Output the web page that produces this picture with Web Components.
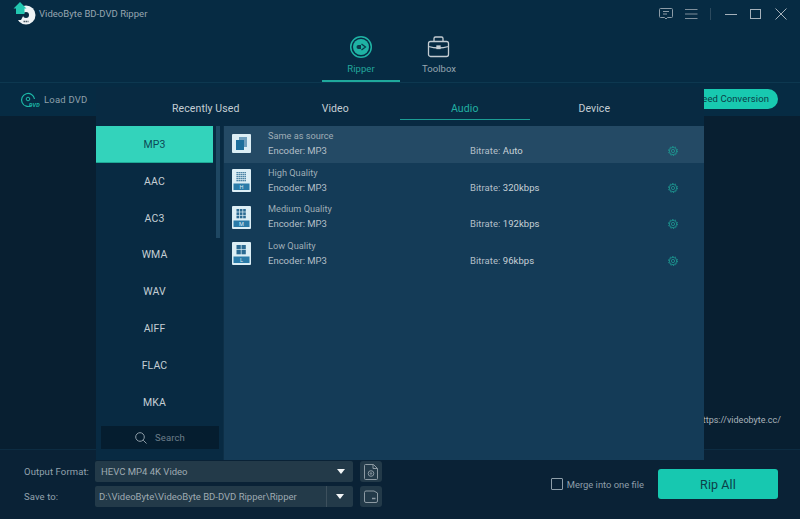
<!DOCTYPE html>
<html><head><meta charset="utf-8"><style>
html,body{margin:0;padding:0;width:800px;height:519px;overflow:hidden;background:#082032;font-family:Roboto,"Liberation Sans",sans-serif}
</style></head><body>
<vb-app></vb-app>
<template id="t-app"><style>
:host{display:flex;flex-direction:column;width:800px;height:519px;position:relative;overflow:hidden;background:#0a2236}
.mid{flex:1;min-height:0;display:flex;background:#081f31;justify-content:flex-end;align-items:flex-end}
.url{font-size:9px;color:#a9b4bc;padding:0 19px 24px 0}
</style>
<vb-header></vb-header><vb-loadbar></vb-loadbar>
<div class="mid"><div class="url">https://videobyte.cc/</div></div>
<vb-footer></vb-footer>
<vb-popup></vb-popup>
</template>

<template id="t-header"><style>
:host{display:block;height:83px;background:#062b43;box-sizing:border-box;position:relative;border-bottom:1px solid #0d3850}
.top{display:flex;align-items:center;height:27px;padding:0 13px}
.logo{width:26px;height:23px;display:block;align-self:flex-start;margin-top:2px}
.name{font-size:9.500px;letter-spacing:.03px;color:#97a6b1;flex:1}
.ctl{display:flex;align-items:center}
.ctl svg{display:block}
.nav{display:flex;justify-content:center;margin-top:8px}
.tab{width:78px;height:47px;box-sizing:border-box;display:flex;flex-direction:column;align-items:center;font-size:9.500px;color:#97a6b1;letter-spacing:.05px;border-bottom:2px solid transparent}
.tab svg{display:block;height:24px;width:24px;margin-bottom:4px}
.tab.on{color:#22a79b;border-bottom-color:#1fa99c}
</style>
<div class="top">
<svg class="logo" viewBox="13 2 26 23"><circle cx="26" cy="15" r="9.500" fill="#eef3f5"/><circle cx="26" cy="15" r="3" fill="#062b43"/><path d="M14 11h10v3.500l-3 5.500h-7z" fill="#062b43"/><path d="M20 2l6.500 6.500h-2v5.500h-8.500V8.500h-2.500z" fill="#22c7b1"/><path d="M23.500 21.500h5" stroke="#4a5a65" stroke-width="1.500" stroke-dasharray="1.500 .5"/></svg>
<span class="name">VideoByte BD-DVD Ripper</span>
<div class="ctl">
<svg width="16" height="14" viewBox="0 0 16 14" fill="none" stroke="#8d9ca7" style="margin-right:11px"><path d="M2.500 1.500h11a1 1 0 0 1 1 1v7a1 1 0 0 1-1 1H9.500l-1.500 1.500-1.500-1.500h-4a1 1 0 0 1-1-1v-7a1 1 0 0 1 1-1z"/><path d="M5 4.500h6M5 7h4"/></svg>
<svg width="13" height="12" viewBox="0 0 13 12" stroke="#7f8f9b" style="margin-right:12px"><path d="M0 1.500h12.500M0 6h12.500M0 10.500h12.500"/></svg>
<svg width="1" height="12" style="margin-right:14px"><rect width="1" height="12" fill="#2c4a5e"/></svg>
<svg width="12" height="12" stroke="#a5b1ba" style="margin-right:13px"><path d="M0 6.500h12"/></svg>
<svg width="11" height="10" fill="none" stroke="#a5b1ba" style="margin-right:14px"><rect x=".5" y=".5" width="10" height="9"/></svg>
<svg width="12" height="12" fill="none" stroke="#a5b1ba"><path d="M.5.500l11 11M11.500.500l-11 11"/></svg>
</div></div>
<div class="nav">
<div class="tab on"><svg viewBox="0 0 24 24"><circle cx="12" cy="12" r="10.300" fill="none" stroke="#1fb3a4" stroke-width="1.500"/><circle cx="12" cy="12" r="8" fill="#1fb3a4"/><path d="M7.500 12a2 2 0 0 1 2-2h2.500v4H9.500a2 2 0 0 1-2-2z" fill="#0a3a4a"/><path d="M12.500 9l4 3-4 3" fill="none" stroke="#0a3a4a" stroke-width="1.300"/></svg>Ripper</div>
<div class="tab"><svg viewBox="0 0 24 24" fill="none" stroke="#c3ccd2" stroke-width="1.300"><rect x="1.500" y="6.500" width="20" height="15" rx="2"/><path d="M7 6.500V3.500a1.500 1.500 0 0 1 1.500-1.500h6a1.500 1.500 0 0 1 1.500 1.500v3M1.500 11.500q10 3 20 0"/><rect x="10" y="11" width="3" height="2.500" fill="#c3ccd2"/></svg>Toolbox</div>
</div>
</template>

<template id="t-loadbar"><style>
:host{display:flex;align-items:center;justify-content:space-between;height:33px;background:#062b43;padding:0 22px 0 20px;box-sizing:border-box}
.l{display:flex;align-items:center;font-size:9.500px;color:#8fa0ab;gap:3px;letter-spacing:.2px}
.pill{background:#18c9b0;color:#0b3c46;font-size:9.500px;letter-spacing:.1px;height:20px;line-height:20px;border-radius:10px;padding:0 9px 0 40px;margin-top:-1px}
</style>
<div class="l"><svg width="21" height="16" viewBox="0 0 21 16" fill="none"><path d="M11.500 13.500A6.500 6.500 0 1 1 14.500 7" stroke="#1db9a8" stroke-width="1.200"/><circle cx="8" cy="7" r="1.800" stroke="#1db9a8"/><text x="9" y="15" font-size="5.500" font-weight="700" font-style="italic" fill="#1db9a8" font-family="Roboto">DVD</text></svg><span>Load DVD</span></div>
<div class="pill">Speed Conversion</div>
</template>

<template id="t-footer"><style>
:host{display:flex;height:70px;box-sizing:border-box;background:#0a2236;border-top:1px solid #0d2c42;padding:11px 22px 0 24px;position:relative}
.labels{width:71px;font-size:9.500px;color:#93a3ae;display:grid;grid-template-rows:21px 21px;row-gap:4px;align-items:center;letter-spacing:.1px}
.fields{display:grid;grid-template-columns:258px 22px;column-gap:7px;row-gap:4px;grid-auto-rows:21px}
.f{background:#233a49;border-radius:2px;color:#9faab2;font-size:9.500px;display:flex;align-items:center;height:21px;box-sizing:border-box;position:relative}
.f1{padding-left:6px}.f2{padding-left:4px}
.f span{flex:1;white-space:nowrap;overflow:hidden}
.arr{width:0;height:0;border-left:4px solid transparent;border-right:4px solid transparent;border-top:5px solid #f3f6f7;flex:none}
.f1 .arr{margin-right:8px}
.sep{flex:none;width:27px;height:100%;border-left:1px solid #3d505d;display:flex;align-items:center;justify-content:center;box-sizing:border-box}
.btn{background:#233a49;border-radius:3px;display:flex;align-items:center;justify-content:center;height:21px}
.r{margin-left:auto;display:flex;align-items:flex-start}
.merge{display:flex;align-items:center;font-size:9.400px;color:#8e9ea9;margin-top:12px;height:22px;margin-right:14px}
.box{width:10px;height:10px;border:1px solid #8e9ea9;border-radius:1px;margin-right:4px}
.rip{width:120px;height:30px;background:#17c8b0;border-radius:3px;color:#0c3f48;font-size:12.500px;display:flex;align-items:center;justify-content:center;margin-top:8px;letter-spacing:.1px}
</style>
<div class="labels"><div>Output Format:</div><div>Save to:</div></div>
<div class="fields">
<div class="f f1"><span>HEVC MP4 4K Video</span><div class="arr"></div></div>
<div class="btn"><svg width="14" height="16" viewBox="0 0 14 16" fill="none" stroke="#8d9aa3"><path d="M1.500.500h8l4 4v10a1 1 0 0 1-1 1h-11a1 1 0 0 1-1-1v-13a1 1 0 0 1 1-1z"/><path d="M9 .500v4h4.500"/><circle cx="7" cy="9.500" r="2.800"/><circle cx="7" cy="9.500" r=".8"/></svg></div>
<div class="f f2"><span>D:\VideoByte\VideoByte BD-DVD Ripper\Ripper</span><div class="sep"><div class="arr"></div></div></div>
<div class="btn"><svg width="14" height="13" viewBox="0 0 14 13" fill="none" stroke="#8d9aa3"><path d="M.5 2.500a1.500 1.500 0 0 1 1.500-1.500h8l3.500 2v8a1.500 1.500 0 0 1-1.500 1.500H2A1.500 1.500 0 0 1 .5 11z"/><path d="M8 8.500h3.500" stroke-width="1.500"/></svg></div>
</div>
<div class="r"><div class="merge"><div class="box"></div>Merge into one file</div><div class="rip">Rip All</div></div>
</template>

<template id="t-popup"><style>
:host{position:absolute;left:96px;top:87px;width:608px;height:373px;background:#082a42;display:flex;flex-direction:column}
.tabs{height:39px;display:flex;flex:none;padding-left:45px}
.t{width:129.500px;height:33px;box-sizing:border-box;display:flex;align-items:center;justify-content:center;font-size:10.500px;color:#c4ced4;letter-spacing:.1px;border-bottom:1px solid transparent;padding-top:10px}
.t.on{color:#22b0a2;border-bottom-color:#1b9d94}
.body{flex:1;display:flex;min-height:0}
.side{width:127px;flex:none;display:flex;flex-direction:column;position:relative;box-sizing:border-box}
.fmt{width:117px;height:36.850px;flex:none;display:flex;align-items:center;justify-content:center;font-size:10.500px;color:#c4ced4;letter-spacing:.1px}
.fmt.on{background:#33d3bb;color:#0d4a55;border-bottom:1px solid #1fa896;box-sizing:border-box;padding-top:1px}
.scroll{position:absolute;left:120px;top:0;width:4px;height:112px;background:#1e4762}
.search{position:absolute;left:5px;bottom:11px;width:118px;height:23px;background:#051d2f;display:flex;align-items:center;justify-content:center;color:#6d7e8a;font-size:9.500px;gap:8px;letter-spacing:.1px}
.main{flex:1;background:#143b57;border-left:1px solid #0d2f47;display:flex;flex-direction:column}
</style>
<div class="tabs"><div class="t">Recently Used</div><div class="t">Video</div><div class="t on">Audio</div><div class="t">Device</div></div>
<div class="body">
<div class="side">
<div class="fmt on">MP3</div><div class="fmt">AAC</div><div class="fmt">AC3</div><div class="fmt">WMA</div><div class="fmt">WAV</div><div class="fmt">AIFF</div><div class="fmt">FLAC</div><div class="fmt">MKA</div>
<div class="scroll"></div>
<div class="search"><svg width="12" height="12" viewBox="0 0 12 12" fill="none" stroke="#8d9ca7"><circle cx="5" cy="5" r="4.300"/><path d="M8.200 8.200l3.300 3.300"/></svg>Search</div>
</div>
<div class="main">
<vb-row kind="same" class="on" title-text="Same as source" rate="Auto"></vb-row>
<vb-row kind="h" title-text="High Quality" rate="320kbps"></vb-row>
<vb-row kind="m" title-text="Medium Quality" rate="192kbps"></vb-row>
<vb-row kind="l" title-text="Low Quality" rate="96kbps"></vb-row>
</div></div>
</template>

<template id="t-row"><style>
:host{display:flex;height:36.700px;align-items:center;box-sizing:border-box;font-size:9.500px;color:#b3bfc7;position:relative}
:host(.on){background:#244a65}
.ic{width:19px;margin-left:8px;margin-top:-1px;flex:none;display:block}
.txt{margin-left:17px;width:202px;display:flex;flex-direction:column;gap:4px;line-height:11px;margin-bottom:2.600px}
.tt{color:#9fadb6;font-size:9.200px}
.rate{width:198px;margin-top:12.400px;letter-spacing:.05px}
.rate b{font-weight:400;color:#c9d2d7}
.gear{display:block;margin-top:13px}
</style>
<svg class="ic" id="ic"></svg>
<div class="txt"><div class="tt" id="t"></div><div>Encoder: MP3</div></div>
<div class="rate">Bitrate: <b id="r"></b></div>
<svg class="gear" width="10" height="10" viewBox="0 0 10 10" fill="none" stroke="#1e9c93"><circle cx="5" cy="5" r="3.700" stroke-width=".8"/><circle cx="5" cy="5" r="4.500" stroke-width="1" stroke-dasharray="1.300 1.530"/><circle cx="5" cy="5" r="1.600" stroke-width=".8"/></svg>
</template>

<script>
function tpl(id){return document.getElementById(id).content.cloneNode(true)}
function def(tag,id,fn){customElements.define(tag,class extends HTMLElement{constructor(){super();this.attachShadow({mode:'open'}).appendChild(tpl(id))}connectedCallback(){fn&&fn(this)}})}
def('vb-header','t-header');def('vb-loadbar','t-loadbar');def('vb-footer','t-footer');def('vb-popup','t-popup');
def('vb-row','t-row',el=>{
 const s=el.shadowRoot;
 s.getElementById('t').textContent=el.getAttribute('title-text');
 s.getElementById('r').textContent=el.getAttribute('rate');
 const k=el.getAttribute('kind');
 const ic=s.getElementById('ic');
 const H=k==='same'?19:23;
 ic.setAttribute('viewBox','0 0 19 '+H);ic.style.height=H+'px';
 let h=`<rect width="19" height="${H}" rx="1" fill="#dceef5"/>`;
 if(k==='same'){h+='<rect x="7" y="3" width="8" height="10" fill="#6f9fbd"/><rect x="4" y="6" width="8" height="10" fill="#1d6f9c"/>';}
 else{
  h+='<rect x="1.500" y="14.500" width="16" height="6.500" fill="#2a7ba8"/>';
  h+='<text x="9.500" y="20" text-anchor="middle" font-size="5.500" fill="#dceef5" font-family="Roboto">'+k.toUpperCase()+'</text>';
  const n={h:5,m:3,l:2}[k],sz=10/n;
  for(let i=0;i<n;i++)for(let j=0;j<n;j++)h+=`<rect x="${4.500+i*sz}" y="${3+j*sz}" width="${sz-.7}" height="${sz-.7}" fill="#2a6a92"/>`;
 }
 ic.innerHTML=h;
});
def('vb-app','t-app');
</script>
</body></html>
